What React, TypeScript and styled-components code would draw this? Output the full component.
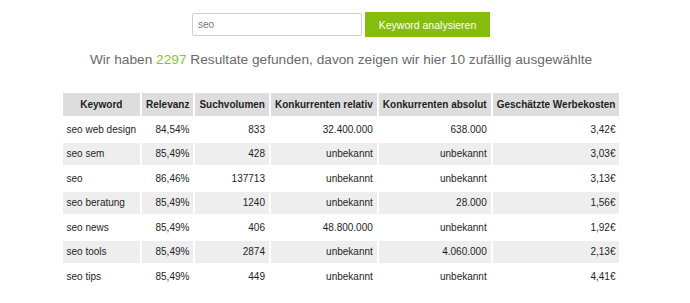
import styled, { createGlobalStyle } from 'styled-components';

const GlobalStyle = createGlobalStyle`
  body {
    margin: 0;
    background: #ffffff;
    font-family: 'Liberation Sans', Arial, sans-serif;
  }
`;

const Page = styled.div`
  width: 682px;
  text-align: center;
  padding-top: 12px;
`;

const SearchForm = styled.form`
  display: flex;
  justify-content: center;
  align-items: center;
  gap: 3px;
`;

const SearchInput = styled.input`
  width: 170px;
  height: 23px;
  box-sizing: border-box;
  border: 1px solid #cfcfcf;
  border-radius: 2px;
  padding: 0 5px;
  font-family: 'Liberation Sans', Arial, sans-serif;
  font-size: 10px;
  color: #777;
  outline: none;
`;

const AnalyzeButton = styled.button`
  width: 125px;
  height: 25px;
  border: none;
  background: #86bc0c;
  color: #ffffff;
  font-family: 'Liberation Sans', Arial, sans-serif;
  font-size: 10.5px;
  cursor: pointer;
`;

const Summary = styled.p`
  margin: 14px 0 0;
  font-size: 13.7px;
  color: #6a6a6a;
  line-height: 18px;
`;

const Count = styled.span`
  color: #8cc33a;
`;

const ResultTable = styled.table`
  margin: 22px auto 0;
  border-spacing: 2px;
  font-size: 10px;
  color: #1e1e1e;
`;

const HeadCell = styled.th`
  background: #dddddd;
  font-weight: bold;
  padding: 0 4px;
  height: 23px;
  white-space: nowrap;
`;

const Row = styled.tr<{ $shaded: boolean }>`
  background: ${(p) => (p.$shaded ? '#eeeeee' : '#ffffff')};
`;

const Cell = styled.td<{ $left?: boolean }>`
  padding: 0 4px;
  height: 22.5px;
  text-align: ${(p) => (p.$left ? 'left' : 'right')};
  white-space: nowrap;
`;

const headers = [
  'Keyword',
  'Relevanz',
  'Suchvolumen',
  'Konkurrenten relativ',
  'Konkurrenten absolut',
  'Geschätzte Werbekosten',
];

const rows = [
  ['seo web design', '84,54%', '833', '32.400.000', '638.000', '3,42€'],
  ['seo sem', '85,49%', '428', 'unbekannt', 'unbekannt', '3,03€'],
  ['seo', '86,46%', '137713', 'unbekannt', 'unbekannt', '3,13€'],
  ['seo beratung', '85,49%', '1240', 'unbekannt', '28.000', '1,56€'],
  ['seo news', '85,49%', '406', '48.800.000', 'unbekannt', '1,92€'],
  ['seo tools', '85,49%', '2874', 'unbekannt', '4.060.000', '2,13€'],
  ['seo tips', '85,49%', '449', 'unbekannt', 'unbekannt', '4,41€'],
];

export default function App() {
  return (
    <>
      <GlobalStyle />
      <Page>
        <SearchForm onSubmit={(e) => e.preventDefault()}>
          <SearchInput type="text" defaultValue="seo" />
          <AnalyzeButton type="submit">Keyword analysieren</AnalyzeButton>
        </SearchForm>
        <Summary>
          Wir haben <Count>2297</Count> Resultate gefunden, davon zeigen wir hier 10 zufällig ausgewählte
        </Summary>
        <ResultTable>
          <thead>
            <tr>
              {headers.map((h) => (
                <HeadCell key={h}>{h}</HeadCell>
              ))}
            </tr>
          </thead>
          <tbody>
            {rows.map((r, i) => (
              <Row key={r[0]} $shaded={i % 2 === 1}>
                {r.map((c, j) => (
                  <Cell key={j} $left={j === 0}>
                    {c}
                  </Cell>
                ))}
              </Row>
            ))}
          </tbody>
        </ResultTable>
      </Page>
    </>
  );
}
